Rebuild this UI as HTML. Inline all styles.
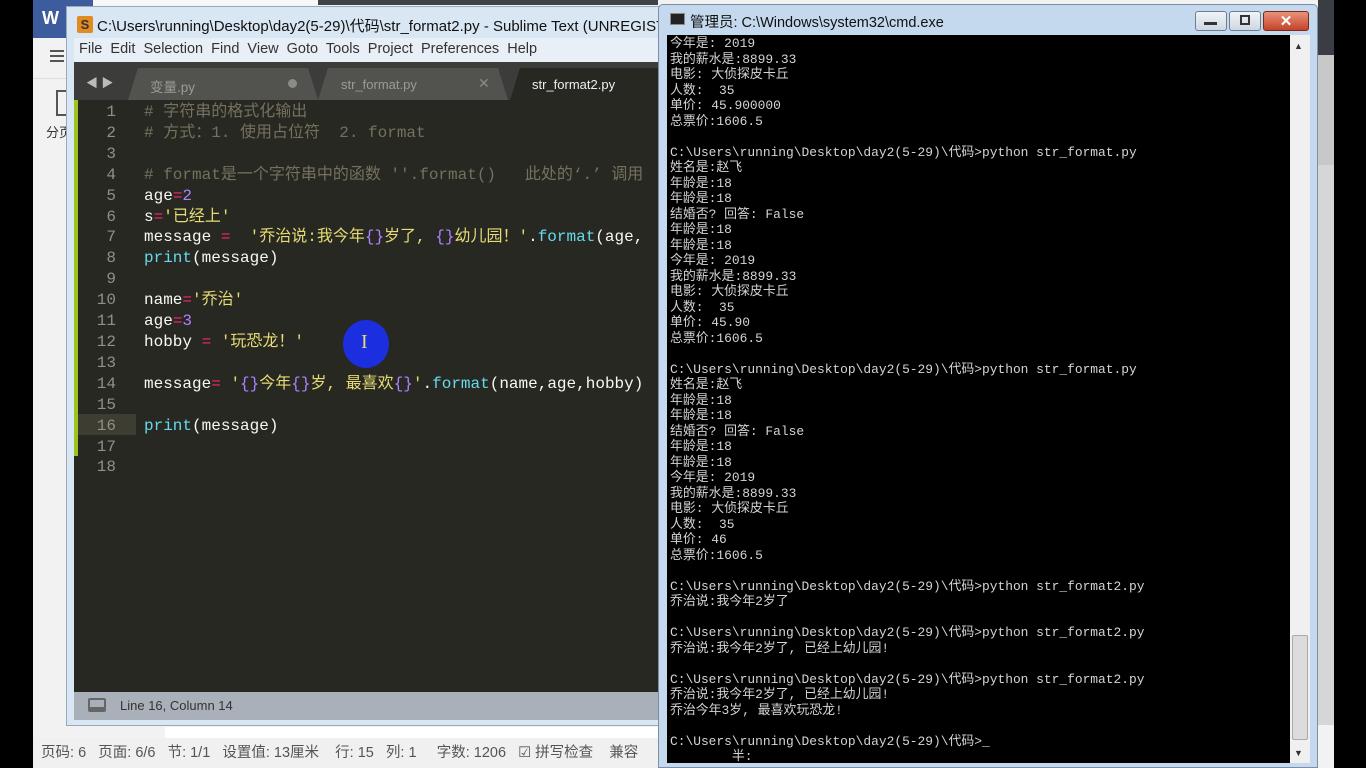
<!DOCTYPE html>
<html><head><meta charset="utf-8"><style>
*{margin:0;padding:0;box-sizing:border-box}
body{width:1366px;height:768px;background:#000;position:relative;overflow:hidden;font-family:"Liberation Sans","Noto Sans CJK SC",sans-serif}
.a{position:absolute}
.code{font-family:"Liberation Mono","Noto Sans CJK SC",monospace;font-size:16px;color:#f8f8f2;white-space:pre}
.ln{position:absolute;left:80px;width:36px;text-align:right;font-family:"Liberation Mono",monospace;font-size:16px;color:#8f908a}
.c{color:#75715e}.p{color:#f92672}.n{color:#ae81ff}.s{color:#e6db74}.f{color:#66d9ef}
.cmd{font-family:"Liberation Mono","Noto Sans CJK SC",monospace;font-size:12.9px;color:#d4d4d4;white-space:pre;line-height:15.5px}
</style></head><body>
<div class="a" style="left:33px;top:0;width:1301px;height:768px;background:#f2f2f2"></div>
<div class="a" style="left:33px;top:0;width:60px;height:38px;background:#3d5c9e"></div>
<div class="a" style="left:42px;top:8px;color:#fff;font-weight:bold;font-size:18px">W</div>
<div class="a" style="left:93px;top:0;width:225px;height:5px;background:#f7f7f7"></div>
<div class="a" style="left:318px;top:0;width:340px;height:5px;background:#40434a"></div>
<div class="a" style="left:33px;top:78px;width:33px;height:1px;background:#ddd"></div>
<div class="a" style="left:50px;top:50px;width:14px;height:2px;background:#555;box-shadow:0 5px #555,0 10px #555"></div>
<div class="a" style="left:56px;top:90px;width:12px;height:26px;border:2px solid #555;border-right:none"></div>
<div class="a" style="left:46px;top:122px;font-size:13px;color:#333">分页</div>
<div class="a" style="left:1318px;top:0;width:16px;height:100px;background:#3a3d44"></div>
<div class="a" style="left:1318px;top:55px;width:16px;height:110px;background:#c8c8c8"></div>
<div class="a" style="left:1318px;top:165px;width:16px;height:560px;background:#d6d6d6"></div>
<div class="a" style="left:33px;top:738px;width:630px;height:30px;background:#f0f0f0;font-size:14.5px;color:#555;line-height:30px;white-space:pre">  页码: 6   页面: 6/6   节: 1/1   设置值: 13厘米    行: 15   列: 1     字数: 1206   ☑ 拼写检查    兼容</div>
<div class="a" style="left:165px;top:727px;width:495px;height:11px;background:#fff"></div>

<div class="a" style="left:66px;top:6px;width:594px;height:720px;background:#d9e6f3;border:1px solid #9aa9b8"></div>
<div class="a" style="left:77px;top:16px;width:16px;height:17px;background:#e08a20;border-radius:2px;color:#333;font-weight:bold;font-size:13px;text-align:center;line-height:17px">S</div>
<div class="a" style="left:97px;top:15px;font-size:15px;color:#111;white-space:nowrap">C:\Users\running\Desktop\day2(5-29)\代码\str_format2.py - Sublime Text (UNREGISTERED)</div>
<div class="a" style="left:74px;top:38px;width:586px;height:24px;background:#e9eff7"></div>
<div class="a" style="left:79px;top:41px;font-size:14.5px;color:#333;white-space:pre">File  Edit  Selection  Find  View  Goto  Tools  Project  Preferences  Help</div>
<div class="a" style="left:74px;top:62px;width:586px;height:38px;background:#3c3c3a"></div>
<div class="a" style="left:86px;top:74px;color:#bbb;font-size:12px">◀ ▶</div>
<div class="a" style="left:128px;top:68px;width:190px;height:32px;background:#52524f;clip-path:polygon(10px 0,180px 0,190px 100%,0 100%)"></div>
<div class="a" style="left:150px;top:76px;font-size:13.5px;color:#9a9a98">变量.py</div>
<div class="a" style="left:288px;top:79px;width:9px;height:9px;border-radius:50%;background:#8a8a88"></div>
<div class="a" style="left:318px;top:68px;width:190px;height:32px;background:#52524f;clip-path:polygon(10px 0,180px 0,190px 100%,0 100%)"></div>
<div class="a" style="left:341px;top:77px;font-size:13px;color:#9a9a98">str_format.py</div>
<div class="a" style="left:478px;top:75px;font-size:14px;color:#8a8a88">✕</div>
<div class="a" style="left:510px;top:68px;width:160px;height:32px;background:#272822;clip-path:polygon(10px 0,160px 0,160px 100%,0 100%)"></div>
<div class="a" style="left:532px;top:77px;font-size:13px;color:#eee">str_format2.py</div>
<div class="a" style="left:74px;top:100px;width:586px;height:592px;background:#272822"></div>
<div class="a" style="left:74px;top:100px;width:4px;height:356px;background:#9fc31e"></div>
<div class="a" style="left:78px;top:414px;width:58px;height:21px;background:#3e3d32"></div>
<div class="a" style="left:74px;top:692px;width:586px;height:28px;background:#aab0b9"></div>
<div class="a" style="left:88px;top:698px;width:18px;height:14px;border:2px solid #666;border-bottom-width:5px;border-radius:2px"></div>
<div class="a" style="left:120px;top:698px;font-size:13px;color:#333">Line 16, Column 14</div>
<div class="ln" style="top:102px;line-height:20.9px">1<br>2<br>3<br>4<br>5<br>6<br>7<br>8<br>9<br>10<br>11<br>12<br>13<br>14<br>15<br>16<br>17<br>18</div>
<div class="a code" style="left:144px;top:102px;line-height:20.9px;width:514px;overflow:hidden"><span class="c"># 字符串的格式化输出</span>
<span class="c"># 方式：1. 使用占位符  2. format</span>

<span class="c"># format是一个字符串中的函数 ''.format()   此处的‘.’ 调用</span>
age<span class="p">=</span><span class="n">2</span>
s<span class="p">=</span><span class="s">'已经上'</span>
message <span class="p">=</span>  <span class="s">'乔治说:我今年<span class="n">{}</span>岁了, <span class="n">{}</span>幼儿园！'</span>.<span class="f">format</span>(age,
<span class="f">print</span>(message)

name<span class="p">=</span><span class="s">'乔治'</span>
age<span class="p">=</span><span class="n">3</span>
hobby <span class="p">=</span> <span class="s">'玩恐龙！'</span>

message<span class="p">=</span> <span class="s">'<span class="n">{}</span>今年<span class="n">{}</span>岁, 最喜欢<span class="n">{}</span>'</span>.<span class="f">format</span>(name,age,hobby)

<span class="f">print</span>(message)</div>
<div class="a" style="left:343px;top:320px;width:46px;height:48px;border-radius:50%;background:#1b2fe0"></div>
<div class="a" style="left:361px;top:331px;color:#e6db74;font-size:20px;font-family:'Liberation Serif',serif">I</div>

<div class="a" style="left:658px;top:4px;width:660px;height:764px;background:#c4d8ee;border:1px solid #7a8ea6;border-radius:5px 5px 0 0"></div>
<div class="a" style="left:670px;top:13px;width:15px;height:12px;background:#222;border:1px solid #888"></div>
<div class="a" style="left:690px;top:11px;font-size:14.5px;color:#111">管理员: C:\Windows\system32\cmd.exe</div>
<div class="a" style="left:1195px;top:11px;width:32px;height:20px;background:linear-gradient(#f0f4f8,#cdd7e2);border:1px solid #6d7e92;border-radius:3px"></div>
<div class="a" style="left:1204px;top:22px;width:13px;height:3px;background:#333"></div>
<div class="a" style="left:1229px;top:11px;width:32px;height:20px;background:linear-gradient(#f0f4f8,#cdd7e2);border:1px solid #6d7e92;border-radius:3px"></div>
<div class="a" style="left:1240px;top:15px;width:10px;height:10px;border:2px solid #333"></div>
<div class="a" style="left:1263px;top:11px;width:46px;height:20px;background:linear-gradient(#e9937a,#c4442a);border:1px solid #7a2a1a;border-radius:3px;color:#fff;font-weight:bold;text-align:center;font-size:15px;line-height:19px">✕</div>
<div class="a" style="left:667px;top:35px;width:623px;height:728px;background:#000"></div>
<div class="a" style="left:1290px;top:35px;width:20px;height:728px;background:#f0f0f0"></div>
<div class="a" style="left:1294px;top:41px;font-size:9px;color:#333">▲</div>
<div class="a" style="left:1294px;top:748px;font-size:9px;color:#333">▼</div>
<div class="a" style="left:1292px;top:635px;width:16px;height:105px;background:#dcdcdc;border:1px solid #aaa;border-radius:2px"></div>
<div class="a cmd" style="left:670px;top:36px">今年是: 2019
我的薪水是:8899.33
电影: 大侦探皮卡丘
人数:  35
单价: 45.900000
总票价:1606.5

C:\Users\running\Desktop\day2(5-29)\代码>python str_format.py
姓名是:赵飞
年龄是:18
年龄是:18
结婚否? 回答: False
年龄是:18
年龄是:18
今年是: 2019
我的薪水是:8899.33
电影: 大侦探皮卡丘
人数:  35
单价: 45.90
总票价:1606.5

C:\Users\running\Desktop\day2(5-29)\代码>python str_format.py
姓名是:赵飞
年龄是:18
年龄是:18
结婚否? 回答: False
年龄是:18
年龄是:18
今年是: 2019
我的薪水是:8899.33
电影: 大侦探皮卡丘
人数:  35
单价: 46
总票价:1606.5

C:\Users\running\Desktop\day2(5-29)\代码>python str_format2.py
乔治说:我今年2岁了

C:\Users\running\Desktop\day2(5-29)\代码>python str_format2.py
乔治说:我今年2岁了, 已经上幼儿园!

C:\Users\running\Desktop\day2(5-29)\代码>python str_format2.py
乔治说:我今年2岁了, 已经上幼儿园!
乔治今年3岁, 最喜欢玩恐龙!

C:\Users\running\Desktop\day2(5-29)\代码>_
        半:</div>
</body></html>
